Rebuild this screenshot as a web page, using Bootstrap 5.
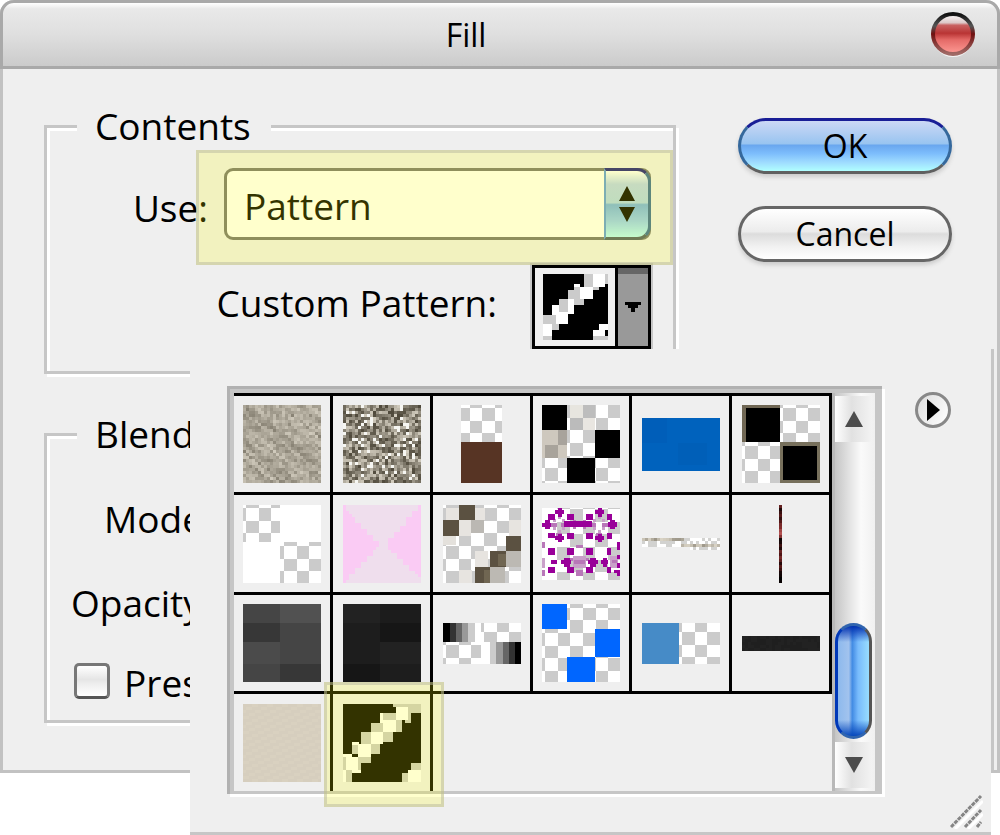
<!DOCTYPE html>
<html lang="en">
<head>
<meta charset="utf-8">
<meta name="viewport" content="width=device-width, initial-scale=1">
<title>Fill</title>
<link href="https://cdn.jsdelivr.net/npm/bootstrap@5.3.0/dist/css/bootstrap.min.css" rel="stylesheet">
<style>
:root{--face:#efefef;--groove:#c6c6c6}
body{background:#fff;color:#000;font-family:"Open Sans","Noto Sans",sans-serif;font-size:37px;line-height:48px;padding-bottom:62px}
.dialog{min-height:773px;background:var(--face);border:3px solid #c2c2c2;border-top:0;border-radius:14px 14px 0 0}
.titlebar{margin:0 -3px;height:69px;border:3px solid #a9a9a9;border-radius:14px 14px 0 0;background:linear-gradient(#fff,#e9e9e9 6px,#dfdfdf 50%,#cbcbcb)}
.titlebar h1{font-size:32px;line-height:40px;font-weight:400;padding:12px 68px 0 0}
.closer{right:22px;top:8px;width:44px;height:46px}
.main-area{padding:56px 45px 0 41px}
.groove{border:3px solid var(--groove);box-shadow:inset 3px 3px 0 #fff,3px 3px 0 #fff}
.groove legend{width:auto;font-size:37px;line-height:46px;height:48px;margin:-25px 0 0 30px;padding:0 20px 0 18px;background:var(--face)}
.contents{width:632px;height:249px}
.blending{width:632px;height:290px;margin-top:59px}
.use-row{clear:both;padding:17px 22px 0 0}
.use-row label{padding-top:8px}
.pattern-box{width:427px;height:72px}
.pattern-box select{height:72px;border:3px solid #747474;border-radius:9px;padding:4px 60px 0 17px;background:#fff;appearance:none;font-size:37px;color:#000}
.stepper{right:0;top:0;width:47px;height:72px;border:3px solid #4b5a6a;border-top-color:#181880;border-left:2px solid #5d9ae0;border-right-color:#35689c;border-radius:0 14px 14px 0;background:linear-gradient(#fff,#b9d3f0 20%,#b1d5ee 48%,#74b0e8 51%,#95ccf7 75%,#b8fbff)}
.spotlight{background:rgba(255,255,0,.2);border:3px solid rgba(184,184,160,.5);pointer-events:none}
.spot-use{inset:-18px -22px -25px -28px}
.spot-cell{inset:-12px -14px -16px -9px;z-index:2}
.custom-row{padding:25px 22px 0 0;gap:35px}
.custom-row label{padding-top:14px}
.swatch{width:119px;height:84px;border:3px solid #000;outline:2px solid #c6c6c6;background:#efefef}
.swatch .drop{width:33px;border-left:3px solid #000;background:linear-gradient(#666 6px,#999 6px)}
.side{width:214px;margin-top:-7px;gap:32px}
.aqua{height:56px;border-radius:28px;border:3px solid #666;font-size:32px;line-height:40px;padding:0;color:#000;background:linear-gradient(#fff,#ececec 45%,#dcdcdc 50%,#f1f1f1 75%,#fff);box-shadow:0 3px 4px #ccc}
.aqua-blue{border-color:#191e96 #35689c #606060;background:linear-gradient(#ccd8f5,#98c4f0 46%,#69a6ee 48%,#7dbdfc 65%,#9fdcff 83%,#b0ffff);}
.options{clear:both;padding-top:18px}
.opt-row{height:84px}
.opt-row:last-child{height:76px}
.tick{width:36px;height:36px;margin:-5px 14px 0 0;border:3px solid #777;border-bottom-color:#555;border-radius:5px;appearance:none;background:linear-gradient(#fff,#e5e5e5 45%,#eee 60%,#fff)}
.popup{left:187px;right:6px;top:349px;height:486px;background:var(--face);border-bottom:3px solid var(--groove);padding:37px 0 0 37px}
.edge{right:3px;top:349px;width:3px;height:421px;background:var(--groove)}
.listing{width:655px;height:408px;border:solid #b1b1b1;border-width:3px 0 0 3px;padding:4px 7px 3px 4px;background:var(--groove);box-shadow:3px 3px 0 #fff}
.tiles{display:grid;width:598px;background:var(--face);grid-template-columns:99px 100px 100px 99px 100px 100px;grid-template-rows:102px 100px 99px 97px}
.tile{border:0 solid #000;border-width:0 3px 3px 0;padding:0;background:none}
.tile.first-line{border-top-width:3px}
.tile.last-line{border-bottom:0}
.track{width:43px;border-left:3px solid #b9b9b9;padding:3px 3px 3px 0;background:linear-gradient(90deg,#c5c5c5,#e2e2e2 35%,#fafafa 65%,#f0f0f0)}
.arrow{height:46px;border:0;padding:0;background:linear-gradient(90deg,#fff,#e1e1e1 45%,#f3f3f3)}
.thumb{width:37px;height:116px;margin-top:181px;border:3px solid #3064ae;border-right-color:#555;border-left-color:#0038b8;border-radius:19px;background:linear-gradient(#0030b0,transparent 16px,transparent 94px,#0748bc),linear-gradient(90deg,#8db9ed,#a2c3ee 35%,#428be3 46%,#78bbfc 65%,#98ddff)}
.menu-btn{width:36px;height:36px;margin:6px 0 0 33px;border:3px solid #888;border-radius:50%;background:linear-gradient(120deg,#ddd,#fff)}
.grip{right:8px;bottom:3px}
svg{display:block}
</style>
</head>
<body class="min-vh-100">
<main class="dialog position-relative">
  <header class="titlebar position-relative">
    <h1 class="text-center m-0">Fill</h1>
    <button class="closer btn p-0 border-0 position-absolute" aria-label="Close">
      <svg width="44" height="46" viewBox="0 0 44 46">
        <defs>
          <linearGradient id="red" x2="0" y2="1"><stop stop-color="#fff"/><stop offset=".22" stop-color="#dcc8c8"/><stop offset=".28" stop-color="#c96262"/><stop offset=".48" stop-color="#b93434"/><stop offset=".65" stop-color="#e56b68"/><stop offset="1" stop-color="#ff9c96"/></linearGradient>
          <linearGradient id="rim" x2="0" y2="1"><stop stop-color="#111"/><stop offset=".3" stop-color="#555"/><stop offset=".5" stop-color="#701010"/><stop offset="1" stop-color="#a06a66"/></linearGradient>
        </defs>
        <ellipse cx="22" cy="25" rx="21" ry="21" fill="#f4f4f4"/>
        <circle cx="22" cy="23" r="20" fill="url(#red)" stroke="url(#rim)" stroke-width="4"/>
      </svg>
    </button>
  </header>

  <div class="main-area d-flex justify-content-between align-items-start">
    <div>
      <fieldset class="groove contents">
        <legend>Contents</legend>
        <div class="use-row d-flex justify-content-end align-items-center">
          <label for="use" class="me-3">Use:</label>
          <div class="pattern-box position-relative">
            <select id="use" class="w-100"><option>Pattern</option></select>
            <span class="stepper position-absolute d-flex align-items-center justify-content-center">
              <svg width="16" height="36" viewBox="0 0 16 36"><path d="M8 0l8 15H0zM0 21h16L8 36z"/></svg>
            </span>
            <span class="spotlight spot-use position-absolute"></span>
          </div>
        </div>
        <div class="custom-row d-flex justify-content-end">
          <label for="custom">Custom Pattern:</label>
          <button id="custom" class="swatch d-flex p-0">
            <span class="flex-fill h-100 d-flex align-items-center justify-content-center" data-icon="swatch"></span>
            <span class="drop h-100 d-flex align-items-center justify-content-center">
              <svg width="16" height="10" viewBox="0 0 16 10" shape-rendering="crispEdges"><path d="M0 0h16v3h-3v3h-3v4H6V6H3V3H0z"/></svg>
            </span>
          </button>
        </div>
      </fieldset>

      <fieldset class="groove blending">
        <legend>Blend</legend>
        <div class="options">
          <div class="d-flex align-items-center opt-row" style="padding-left:57px">Mode</div>
          <div class="d-flex align-items-center opt-row" style="padding-left:24px">Opacity</div>
          <div class="d-flex align-items-center opt-row" style="padding-left:27px">
            <input type="checkbox" class="tick" id="keep"><label for="keep">Pres</label>
          </div>
        </div>
      </fieldset>
    </div>
    <div class="side d-flex flex-column">
      <button class="aqua aqua-blue w-100">OK</button>
      <button class="aqua w-100">Cancel</button>
    </div>
  </div>

  <span class="edge position-absolute"></span>
  <section class="popup position-absolute">
    <div class="d-flex align-items-start">
      <div class="listing d-flex">
        <div class="tiles" id="tiles"></div>
        <div class="track d-flex flex-column">
          <button class="arrow d-flex align-items-center justify-content-center" aria-label="Scroll up"><svg width="18" height="16" viewBox="0 0 18 16"><path fill="#4c4c4c" d="M9 0l9 16H0z"/></svg></button>
          <span class="thumb"></span>
          <button class="arrow d-flex align-items-center justify-content-center mt-auto" aria-label="Scroll down"><svg width="18" height="16" viewBox="0 0 18 16"><path fill="#4c4c4c" d="M0 0h18L9 16z"/></svg></button>
        </div>
      </div>
      <button class="menu-btn p-0 d-flex align-items-center justify-content-center" aria-label="Pattern menu">
        <svg width="13" height="22" viewBox="0 0 13 22"><path d="M0 0l13 11L0 22z"/></svg>
      </button>
    </div>
    <svg class="grip position-absolute" width="33" height="36" viewBox="0 0 33 36" stroke-width="3"><path stroke="#fff" d="M5 36L33 8M18 36l15-15"/><path stroke="#858585" stroke-dasharray="4 1" d="M1 34L31 3M15 34l16-17M27 34l4-5"/></svg>
  </section>
</main>

<script>
// Small seeded generator, so the grainy textures look the same on each load
let seed = 7;
const rnd = () => (seed = (seed * 16807) % 2147483647) / 2147483647;
const rect = (x, y, w, h, f) => `<rect x="${x}" y="${y}" width="${w}" height="${h}" fill="${f}"/>`;
const many = (f, list) => list.map(r => rect(r[0], r[1], r[2], r[3], f)).join('');
// Pixel art is drawn on a grid of thirds: 9 units make one 3px block
const svg = (w, h, body) => `<svg width="${w / 3}" height="${h / 3}" viewBox="0 0 ${w} ${h}" shape-rendering="crispEdges">${body}</svg>`;
const shift = (x, y, body) => `<g transform="translate(${-x} ${-y})">${body}</g>`;
const checker = (w, h, ox, oy, odd) => {
  let s = rect(0, 0, w, h, '#fff');
  for (let r = -1; oy + r * 38 < h; r++) for (let c = -1; ox + c * 38 < w; c++)
    if (((c + r) & 1) === odd) s += rect(ox + c * 38, oy + r * 38, 38, 38, '#cbcbcb');
  return s;
};
const grain = (n, m, fn) => { let s = ''; for (let y = 0; y < m; y++) for (let x = 0; x < n; x++) s += rect(x * 9, y * 9, 9, 9, fn(x, y)); return s; };
const tone = v => `rgb(${v | 0},${(v - 6) | 0},${(v - 20) | 0})`;
const icons = {
  swatch: svg(195, 198, shift(126, 57, rect(126, 57, 195, 198, '#000') +
    many('#cbcbcb', [[249,57,27,38],[312,57,9,30],[219,96,18,18],[276,95,18,9],[201,105,36,27],[174,132,27,48],[219,132,30,18],[126,180,39,27],[153,207,20,18],[126,243,27,12],[276,243,45,12]]) +
    many('#fff', [[276,57,36,38],[219,87,18,9],[237,95,39,37],[201,132,18,46],[153,150,20,30],[165,172,36,35],[126,207,27,36],[294,207,27,18],[276,225,36,18]]))),
  big: svg(234, 234, shift(354, 342, rect(354, 342, 234, 234, '#000') +
    many('#cbcbcb', [[504,342,84,9],[550,350,38,19],[540,369,18,29],[475,369,37,21],[513,390,18,36],[438,399,37,27],[475,426,29,30],[408,426,30,37],[381,465,18,27],[438,462,27,30],[408,492,30,27],[354,501,9,39],[399,501,9,39],[363,540,18,36],[558,519,30,21],[531,549,19,27]]) +
    many('#fff', [[512,350,38,40],[465,369,10,30],[475,390,38,36],[438,426,37,36],[381,456,20,9],[399,463,39,38],[354,492,27,9],[363,501,36,39],[354,540,9,36],[381,540,26,8],[550,540,38,36]])))
};
const streak = [];
const tex1 = grain(26, 26, (x, y) => {
  const k = Math.round((x * .8 - y * 1.0) + 40); streak[k] ??= rnd();
  return tone(133 + streak[k] * 38 + rnd() * 42);
});
const tex2 = grain(26, 26, () => { const v = rnd(); return v > .9 ? '#f6f6f2' : v > .65 ? tone(170 + rnd() * 40) : tone(80 + rnd() * 80); });
const dark = (a, b, c, d) => rect(0,0,111,57,a[0])+rect(111,0,123,57,a[1])+rect(0,57,111,57,b[0])+rect(111,57,123,57,b[1])+rect(0,114,111,66,c[0])+rect(111,114,123,66,c[1])+rect(0,180,111,54,d[0])+rect(111,180,123,54,d[1]);
const P = '#990099', Q = '#b877b8';
const flower = checker(234, 216, 84, 3, 0) + shift(51, 384,
  many('#c9a0c9', [[85,418,9,9],[112,418,9,9],[85,441,9,9],[112,441,9,9],[99,409,9,9],[99,450,9,9],[205,418,9,9],[232,418,9,9],[205,441,9,9],[232,441,9,9],[219,409,9,9],[219,450,9,9],[144,528,40,35],[51,535,9,28],[256,528,24,36]]) +
  many(Q, [[77,428,18,14],[108,428,18,14],[196,428,18,14],[230,428,18,14],[94,459,18,9],[214,459,18,9],[152,495,22,10],[152,570,22,17],[148,540,32,11],[135,535,9,9],[183,535,9,9],[51,486,9,18],[51,570,9,18],[262,540,14,10],[144,420,9,28],[174,420,9,28]]) +
  many(P, [[98,384,12,27],[91,391,27,12],[68,402,22,18],[126,402,20,18],[60,420,15,28],[51,428,27,14],[117,424,34,18],[151,424,26,18],[177,424,24,18],[68,458,22,15],[126,458,20,18],[90,468,27,11],[98,462,12,24],[218,384,12,27],[211,391,27,12],[183,402,20,18],[246,402,14,18],[256,420,14,28],[248,426,27,16],[183,458,20,18],[246,458,14,18],[211,468,27,11],[218,462,12,24],[68,504,22,20],[126,504,20,20],[183,504,20,20],[246,504,13,20],[116,535,18,25],[108,540,30,13],[194,535,18,25],[188,540,30,13],[77,540,20,12],[233,535,13,25],[228,540,20,12],[68,562,22,16],[126,562,20,16],[183,562,20,16],[246,562,13,16],[275,486,10,24],[275,524,10,14],[275,550,10,14],[268,570,17,9],[275,579,10,9]]));
const list = [
  svg(234, 234, tex1),
  svg(234, 234, tex2),
  svg(123, 234, checker(123, 234, -12, 9, 0) + rect(0, 111, 123, 123, '#573424')),
  svg(234, 234, checker(234, 234, 9, 0, 1) + rect(84,0,38,38,'#e7e5df') + rect(122,0,37,38,'#bdbdbd') + rect(84,38,38,37,'#bbb') + rect(122,38,37,37,'#e9e6e1') + rect(0,75,75,84,'#cec8be') + rect(48,75,27,46,'#a8a39c') + rect(9,121,38,38,'#a8a39b') + rect(0,0,75,75,'#000') + rect(159,75,75,84,'#000') + rect(75,159,84,75,'#000')),
  svg(234, 159, rect(0,0,234,159,'#0062bd') + rect(0,0,76,75,'#005eb9') + rect(108,75,87,66,'#005fb8')),
  svg(234, 234, checker(234, 234, 9, 9, 1) + rect(0,0,114,111,'#706754') + rect(12,9,102,102,'#000') + rect(115,111,119,123,'#77705c') + rect(123,123,102,102,'#000')),
  svg(234, 234, checker(234, 234, 9, 9, 1) + rect(111,0,123,111,'#fff') + rect(0,111,111,123,'#fff')),
  svg(234, 234, rect(0,0,234,234,'#efdeed') + '<path fill="#facbf4" d="M0 0h9v18h9v9h9v9h9v18h18v18h18v18h18v18h18v18h-9v9h-9v18H72v18H54v18H36v18H18v18H9v18H0zM234 0h-9v18h-18v18h-18v27h-18v18h-18v18h-18v36h9v9h18v18h18v18h18v18h18v9h9v9h9z"/>'),
  svg(234, 234, checker(234, 234, 9, 9, 1) + rect(9,9,38,36,'#e7e4e0') + rect(48,0,48,45,'#5b5141') + rect(0,45,48,48,'#5b5141') + rect(48,45,36,48,'#e7e4e0') + rect(84,45,38,38,'#bbb8b3') + rect(96,9,30,36,'#e7e4e0') + rect(0,93,40,27,'#e4e1dc') + rect(198,45,36,48,'#e7e4e0') + rect(189,93,45,46,'#5b5141') + rect(141,139,48,46,'#5b5141') + rect(165,146,24,38,'#706652') + rect(189,139,45,46,'#bcb9b3') + rect(96,139,38,46,'#e7e4e0') + rect(96,185,45,49,'#5b5141') + rect(124,194,18,40,'#706652') + rect(141,185,45,49,'#bcb9b3') + rect(48,194,38,40,'#e7e4e0')),
  svg(234, 216, flower),
  svg(234, 36, grain(26, 4, (x, y) => { const v = rnd(); return (y === 0 && x < 14) || (y === 2 && x > 12) ? tone(150 + v * 70) : y === 3 && x < 16 ? '#efefef' : v > .5 ? '#fff' : '#d2d2d0'; })),
  svg(9, 234, ['#642020','#200808','#3a1010','#541818','#341010','#541818','#782a2a','#802c2c','#a04444','#b35050','#823030','#100404','#180606','#3c1010','#200808','#682222','#501414','#742828','#5e1e1e','#280a0a','#561818','#3a1010','#160606','#100404','#000','#080202'].map((c, i) => rect(0, i * 9, 9, 9, c)).join('')),
  svg(234, 234, dark(['#454545','#515151'], ['#373737','#454545'], ['#4b4b4b','#454545'], ['#454545','#373737'])),
  svg(234, 234, dark(['#222','#1c1c1c'], ['#1d1d1d','#161616'], ['#1d1d1d','#222'], ['#161616','#1d1d1d'])),
  svg(234, 123, checker(234, 123, 9, -10, 0) + rect(0,0,21,57,'#000') + rect(21,0,19,57,'#333') + rect(40,0,17,57,'#666') + rect(57,0,19,57,'#999') + rect(76,0,20,57,'#ccc') + rect(96,0,18,57,'#fff') + rect(114,57,27,66,'#fff') + rect(141,57,18,66,'#ccc') + rect(159,57,21,66,'#999') + rect(180,57,18,66,'#666') + rect(198,57,18,66,'#333') + rect(216,57,18,66,'#000')),
  svg(234, 234, checker(234, 234, 9, 11, 1) + rect(0,0,75,75,'#06f') + rect(159,75,75,84,'#06f') + rect(75,159,84,75,'#06f')),
  svg(234, 123, checker(234, 123, 120, 27, 0) + rect(0,0,111,123,'#468bc7')),
  svg(234, 45, grain(26, 5, () => rnd() > .5 ? '#222' : '#1f1f1f')),
  svg(234, 234, grain(26, 26, (x, y) => (x + y * 2) % 5 > 2 ? '#d9d1c0' : '#d6cebe')),
  icons.big
];
document.querySelector('[data-icon=swatch]').innerHTML = icons.swatch;
document.getElementById('tiles').innerHTML = list.map((s, i) =>
  `<button class="tile d-flex align-items-center justify-content-center position-relative${i < 6 ? ' first-line' : ''}${i > 17 ? ' last-line' : ''}" aria-label="Pattern ${i + 1}">${s}${i === 19 ? '<span class="spotlight spot-cell position-absolute"></span>' : ''}</button>`).join('');
</script>
<script src="https://cdn.jsdelivr.net/npm/bootstrap@5.3.0/dist/js/bootstrap.bundle.min.js"></script>
</body>
</html>
